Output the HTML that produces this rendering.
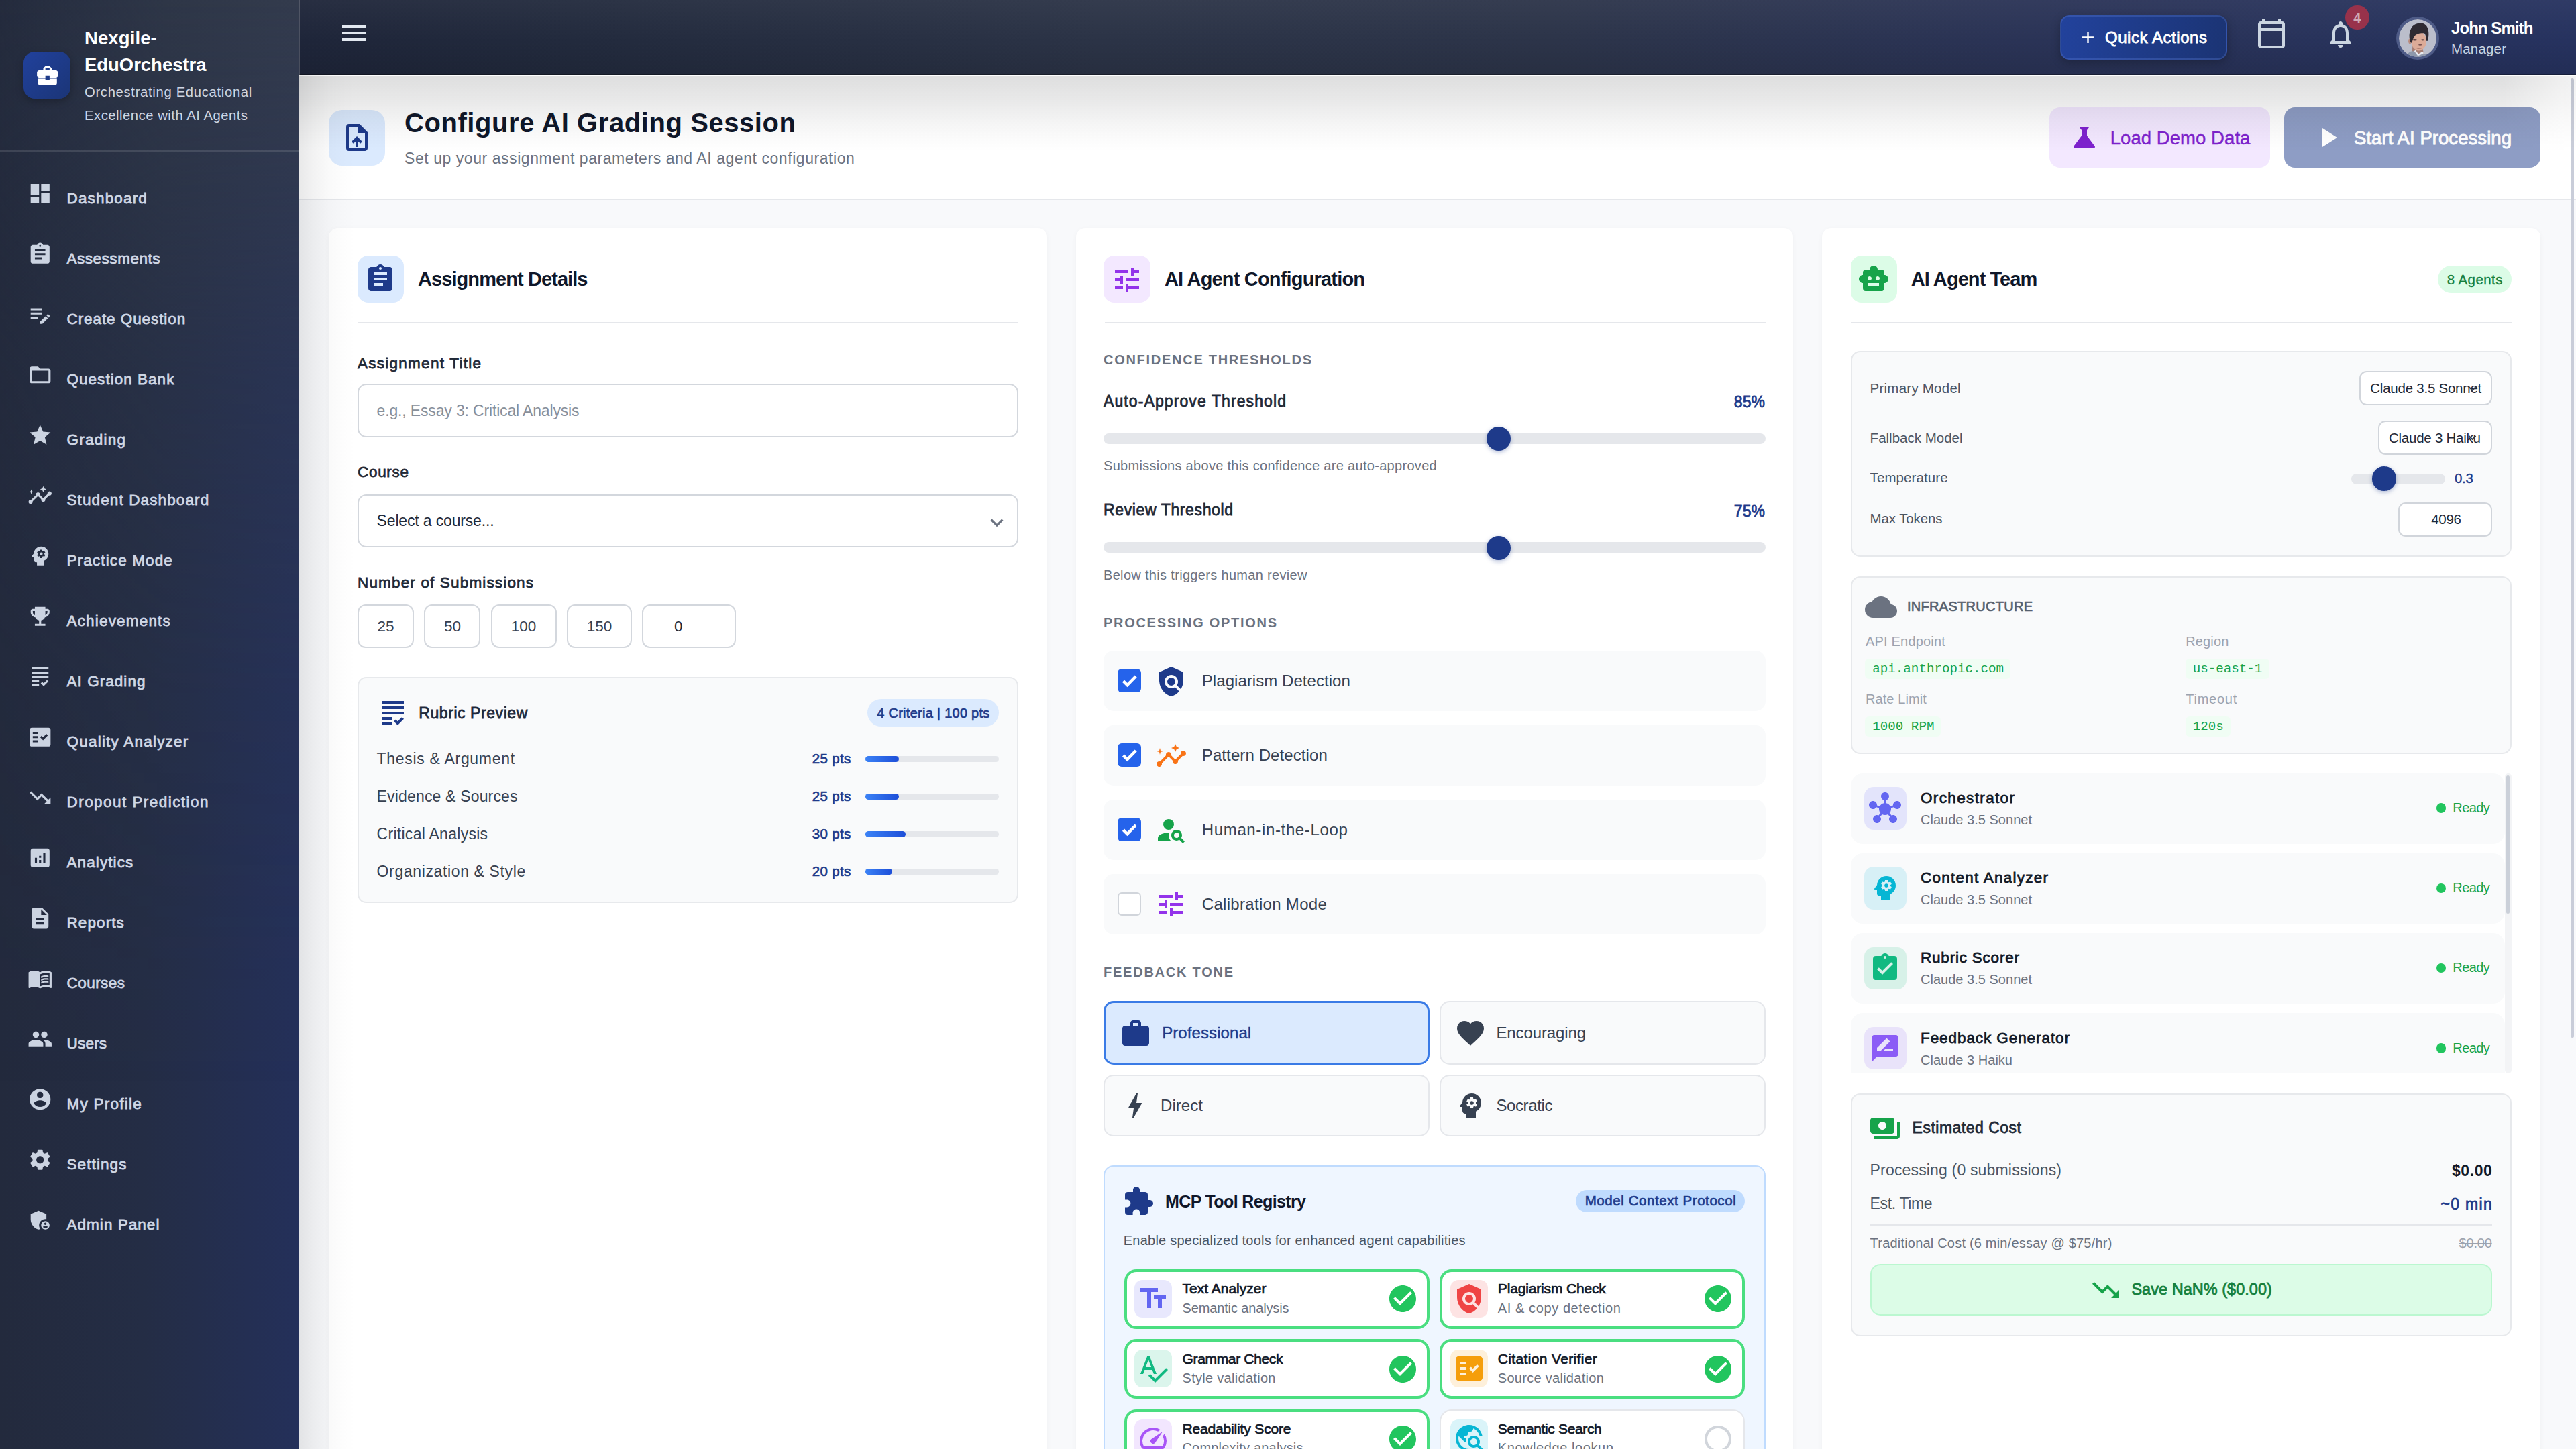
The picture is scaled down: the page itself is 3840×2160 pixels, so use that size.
<!DOCTYPE html>
<html lang="en">
<head>
<meta charset="utf-8">
<title>Configure AI Grading Session - Nexgile-EduOrchestra</title>
<style>
html,body{margin:0;padding:0;background:#f8f9fb;}
body{width:3840px;height:2160px;overflow:hidden;}
#app{position:relative;width:3840px;height:2160px;overflow:hidden;background:#f8f9fb;font-family:"Liberation Sans",sans-serif;}
#app aside,#app header,#app main,#app section,#app nav{display:contents;}
#app div,#app span,#app svg,#app h1,#app h2,#app h3,#app p,#app label,#app a,#app button{position:absolute;box-sizing:border-box;margin:0;padding:0;}
#app .t{white-space:nowrap;line-height:1;font-weight:400;}
#app .f-s{font-family:"Liberation Sans",sans-serif;}
#app .f-m{font-family:"Liberation Mono",monospace;}
#app button{border:none;outline:none;appearance:none;-webkit-appearance:none;font:inherit;}

</style>
</head>
<body>
<div id="app">
<main>
<div style="left:446px;top:112px;width:3394px;height:186px;background:#fff;border-bottom:2px solid #e5e7eb;"></div>
<div style="left:490px;top:164px;width:84px;height:83px;background:#dbeafe;border-radius:20px;"></div>
<svg viewBox="0 0 24 24" style="left:508.2px;top:181.2px;width:48px;height:48px;fill:#1e3a8a;"><path d="M14 2H6c-1.1 0-1.99.9-1.99 2L4 20c0 1.1.89 2 1.99 2H18c1.1 0 2-.9 2-2V8l-6-6zm4 18H6V4h7v5h5v11zM8 15.01l1.41 1.41L11 14.84V19h2v-4.16l1.59 1.59L16 15.01 12.01 11z"/></svg>
<h1 class="t f-s" style="top:162.54px;font-size:40px;color:#0f172a;font-weight:700;letter-spacing:0.575px;left:603px;">Configure AI Grading Session</h1>
<p class="t f-s" style="top:225.43px;font-size:23px;color:#6b7280;letter-spacing:0.556px;left:603px;">Set up your assignment parameters and AI agent configuration</p>
<button style="left:3054.5px;top:160.3px;width:329.5px;height:89.4px;background:#f3e8ff;border-radius:16px;"></button>
<svg viewBox="0 0 24 24" style="left:3082.6px;top:181px;width:48px;height:48px;fill:#7e22ce;"><path d="M19.8 18.4L14 10.67V6.5l1.35-1.69c.26-.33.03-.81-.39-.81H9.04c-.42 0-.65.48-.39.81L10 6.5v4.17L4.2 18.4c-.49.66-.02 1.6.8 1.6h14c.82 0 1.29-.94.8-1.6z"/></svg>
<span class="t f-s" style="top:192.22px;font-size:27.5px;color:#7e22ce;-webkit-text-stroke:0.44px;letter-spacing:0.061px;left:3145.7px;">Load Demo Data</span>
<button style="left:3404.7px;top:160.3px;width:382.4px;height:89.4px;background:#8e9dc5;border-radius:16px;"></button>
<svg viewBox="0 0 24 24" style="left:3446.1px;top:181.2px;width:48px;height:48px;fill:#fff;"><path d="M8 5v14l11-7z"/></svg>
<span class="t f-s" style="top:192.22px;font-size:27.5px;color:#fff;-webkit-text-stroke:0.94px;letter-spacing:0.063px;left:3509px;">Start AI Processing</span>
<div style="left:490px;top:340px;width:1071px;height:1900px;background:#fff;border-radius:14px;box-shadow:0 2px 8px rgba(15,23,42,0.04);"></div>
<div style="left:533px;top:480px;width:985px;height:2px;background:#e5e7eb;"></div>
<div style="left:1603.5px;top:340px;width:1069.5px;height:1900px;background:#fff;border-radius:14px;box-shadow:0 2px 8px rgba(15,23,42,0.04);"></div>
<div style="left:1646.5px;top:480px;width:985px;height:2px;background:#e5e7eb;"></div>
<div style="left:2716px;top:340px;width:1071px;height:1900px;background:#fff;border-radius:14px;box-shadow:0 2px 8px rgba(15,23,42,0.04);"></div>
<div style="left:2759px;top:480px;width:985px;height:2px;background:#e5e7eb;"></div>
<section>
<div style="left:533px;top:381px;width:69px;height:70px;background:#dbeafe;border-radius:16px;"></div>
<svg viewBox="0 0 24 24" style="left:543.1px;top:392px;width:48px;height:48px;fill:#1e3a8a;"><path d="M19 3h-4.18C14.4 1.84 13.3 1 12 1c-1.3 0-2.4.84-2.82 2H5c-1.1 0-2 .9-2 2v14c0 1.1.9 2 2 2h14c1.1 0 2-.9 2-2V5c0-1.1-.9-2-2-2zm-7 0c.55 0 1 .45 1 1s-.45 1-1 1-1-.45-1-1 .45-1 1-1zm2 14H7v-2h7v2zm3-4H7v-2h10v2zm0-4H7V7h10v2z"/></svg>
<h2 class="t f-s" style="top:401.75px;font-size:29px;color:#0f172a;font-weight:700;letter-spacing:-0.920px;left:623px;">Assignment Details</h2>
<label class="t f-s" style="top:530.65px;font-size:22.5px;color:#1f2937;-webkit-text-stroke:0.77px;letter-spacing:1.261px;left:533px;">Assignment Title</label>
<div style="left:533px;top:572px;width:985px;height:80.2px;background:#fff;border:2px solid #d3d7dd;border-radius:13px;"></div>
<span class="t f-s" style="top:601.03px;font-size:23px;color:#878f9b;letter-spacing:-0.155px;left:561.6px;">e.g., Essay 3: Critical Analysis</span>
<label class="t f-s" style="top:693.15px;font-size:22.5px;color:#1f2937;-webkit-text-stroke:0.77px;letter-spacing:0.691px;left:533px;">Course</label>
<div style="left:533px;top:736.6px;width:985px;height:79.4px;background:#fff;border:2px solid #d3d7dd;border-radius:13px;"></div>
<span class="t f-s" style="top:765.03px;font-size:23px;color:#1f2937;letter-spacing:-0.159px;left:561.6px;">Select a course...</span>
<svg viewBox="0 0 24 24" style="left:1466.5px;top:759.5px;width:38px;height:38px;fill:#6b7280;"><path d="M16.59 8.59L12 13.17 7.41 8.59 6 10l6 6 6-6z"/></svg>
<label class="t f-s" style="top:858.25px;font-size:22.5px;color:#1f2937;-webkit-text-stroke:0.77px;letter-spacing:1.158px;left:533px;">Number of Submissions</label>
<div style="left:533px;top:901.4px;width:84px;height:65px;background:#fff;border:2px solid #d3d7dd;border-radius:12px;"></div>
<span class="t f-s" style="top:923.45px;font-size:22.5px;color:#374151;left:575.00px;transform:translateX(-50%);">25</span>
<div style="left:632.4px;top:901.4px;width:84px;height:65px;background:#fff;border:2px solid #d3d7dd;border-radius:12px;"></div>
<span class="t f-s" style="top:923.45px;font-size:22.5px;color:#374151;left:674.40px;transform:translateX(-50%);">50</span>
<div style="left:731.6px;top:901.4px;width:98px;height:65px;background:#fff;border:2px solid #d3d7dd;border-radius:12px;"></div>
<span class="t f-s" style="top:923.45px;font-size:22.5px;color:#374151;left:780.60px;transform:translateX(-50%);">100</span>
<div style="left:845.2px;top:901.4px;width:96.6px;height:65px;background:#fff;border:2px solid #d3d7dd;border-radius:12px;"></div>
<span class="t f-s" style="top:923.45px;font-size:22.5px;color:#374151;left:893.50px;transform:translateX(-50%);">150</span>
<div style="left:957px;top:901.4px;width:140px;height:65px;background:#fff;border:2px solid #d3d7dd;border-radius:12px;"></div>
<span class="t f-s" style="top:923.45px;font-size:22.5px;color:#1f2937;left:1005px;">0</span>
<div style="left:533px;top:1008.8px;width:985px;height:337.7px;background:#f9fafb;border:2px solid #e7e9ec;border-radius:13px;"></div>
<svg viewBox="0 0 24 24" style="left:561.5px;top:1039px;width:48px;height:48px;fill:#1e3a8a;"><path d="M4 7h16v2H4V7zm0 6h16v-2H4v2zm0 4h7v-2H4v2zm0 4h7v-2H4v2zm11.41-2.83L14 16.75l-1.41 1.41L15.41 21 20 16.42 18.58 15l-3.17 3.17zM4 3v2h16V3H4z"/></svg>
<h3 class="t f-s" style="top:1051.53px;font-size:23px;color:#1e293b;-webkit-text-stroke:0.78px;letter-spacing:0.565px;left:624.3px;">Rubric Preview</h3>
<div style="left:1292.8px;top:1042.2px;width:196.4px;height:41px;background:#dbeafe;border-radius:21px;"></div>
<span class="t f-s" style="top:1052.87px;font-size:20px;color:#1e3a8a;-webkit-text-stroke:0.68px;letter-spacing:0.261px;left:1307.3px;">4 Criteria | 100 pts</span>
<span class="t f-s" style="top:1120.13px;font-size:23px;color:#374151;letter-spacing:0.699px;left:561.6px;">Thesis &amp; Argument</span>
<span class="t f-s" style="top:1120.85px;font-size:20.5px;color:#1e3a8a;-webkit-text-stroke:0.70px;letter-spacing:0.308px;right:2571.49px;">25 pts</span>
<div style="left:1289.8px;top:1126.5px;width:199.4px;height:9px;background:#e5e7eb;border-radius:5px;"></div>
<div style="left:1289.8px;top:1126.5px;width:49.85px;height:9px;background:linear-gradient(90deg,#3b82f6,#1d4ed8);border-radius:5px;"></div>
<span class="t f-s" style="top:1176.03px;font-size:23px;color:#374151;letter-spacing:0.169px;left:561.6px;">Evidence &amp; Sources</span>
<span class="t f-s" style="top:1176.75px;font-size:20.5px;color:#1e3a8a;-webkit-text-stroke:0.70px;letter-spacing:0.308px;right:2571.49px;">25 pts</span>
<div style="left:1289.8px;top:1182.5px;width:199.4px;height:9px;background:#e5e7eb;border-radius:5px;"></div>
<div style="left:1289.8px;top:1182.5px;width:49.85px;height:9px;background:linear-gradient(90deg,#3b82f6,#1d4ed8);border-radius:5px;"></div>
<span class="t f-s" style="top:1231.93px;font-size:23px;color:#374151;letter-spacing:0.278px;left:561.6px;">Critical Analysis</span>
<span class="t f-s" style="top:1232.65px;font-size:20.5px;color:#1e3a8a;-webkit-text-stroke:0.70px;letter-spacing:0.308px;right:2571.49px;">30 pts</span>
<div style="left:1289.8px;top:1238.5px;width:199.4px;height:9px;background:#e5e7eb;border-radius:5px;"></div>
<div style="left:1289.8px;top:1238.5px;width:59.82px;height:9px;background:linear-gradient(90deg,#3b82f6,#1d4ed8);border-radius:5px;"></div>
<span class="t f-s" style="top:1287.83px;font-size:23px;color:#374151;letter-spacing:0.633px;left:561.6px;">Organization &amp; Style</span>
<span class="t f-s" style="top:1288.55px;font-size:20.5px;color:#1e3a8a;-webkit-text-stroke:0.70px;letter-spacing:0.308px;right:2571.49px;">20 pts</span>
<div style="left:1289.8px;top:1294.5px;width:199.4px;height:9px;background:#e5e7eb;border-radius:5px;"></div>
<div style="left:1289.8px;top:1294.5px;width:39.88px;height:9px;background:linear-gradient(90deg,#3b82f6,#1d4ed8);border-radius:5px;"></div>
</section>
<section>
<div style="left:1645px;top:381px;width:70px;height:70px;background:#f3e8ff;border-radius:16px;"></div>
<svg viewBox="0 0 24 24" style="left:1655.8px;top:392.5px;width:48px;height:48px;fill:#9333ea;"><path d="M3 17v2h6v-2H3zM3 5v2h10V5H3zm10 16v-2h8v-2h-8v-2h-2v6h2zM7 9v2H3v2h4v2h2V9H7zm14 4v-2H11v2h10zm-6-4h2V7h4V5h-4V3h-2v6z"/></svg>
<h2 class="t f-s" style="top:401.75px;font-size:29px;color:#0f172a;font-weight:700;letter-spacing:-0.823px;left:1736px;">AI Agent Configuration</h2>
<h3 class="t f-s" style="top:526.07px;font-size:20px;color:#6b7280;font-weight:700;letter-spacing:1.721px;left:1645px;">CONFIDENCE THRESHOLDS</h3>
<span class="t f-s" style="top:586.53px;font-size:23px;color:#1f2937;-webkit-text-stroke:0.78px;letter-spacing:1.100px;left:1645px;">Auto-Approve Threshold</span>
<span class="t f-s" style="top:587.53px;font-size:23px;color:#1e3a8a;-webkit-text-stroke:0.78px;letter-spacing:0.077px;right:1208.92px;">85%</span>
<div style="left:1645px;top:645.5px;width:987px;height:16px;background:#e5e7eb;border-radius:8px;"></div>
<div style="left:2215.5px;top:635.6px;width:36px;height:36px;background:#1e3a8a;border-radius:50%;box-shadow:0 2px 6px rgba(30,58,138,0.35);"></div>
<span class="t f-s" style="top:684.07px;font-size:20px;color:#6b7280;letter-spacing:0.306px;left:1645px;">Submissions above this confidence are auto-approved</span>
<span class="t f-s" style="top:748.53px;font-size:23px;color:#1f2937;-webkit-text-stroke:0.78px;letter-spacing:0.622px;left:1645px;">Review Threshold</span>
<span class="t f-s" style="top:750.53px;font-size:23px;color:#1e3a8a;-webkit-text-stroke:0.78px;letter-spacing:0.077px;right:1208.92px;">75%</span>
<div style="left:1645px;top:808.3px;width:987px;height:16px;background:#e5e7eb;border-radius:8px;"></div>
<div style="left:2215.5px;top:799px;width:36px;height:36px;background:#1e3a8a;border-radius:50%;box-shadow:0 2px 6px rgba(30,58,138,0.35);"></div>
<span class="t f-s" style="top:847.27px;font-size:20px;color:#6b7280;letter-spacing:0.324px;left:1645px;">Below this triggers human review</span>
<h3 class="t f-s" style="top:918.07px;font-size:20px;color:#6b7280;font-weight:700;letter-spacing:1.710px;left:1645px;">PROCESSING OPTIONS</h3>
<div style="left:1645px;top:970.4px;width:987px;height:89.8px;background:#f9fafb;border-radius:15px;"></div>
<div style="left:1665.5px;top:997.2px;width:35px;height:35px;background:#2563eb;border-radius:6px;"></div>
<svg viewBox="0 0 24 24" style="left:1667.5px;top:999.2px;width:31px;height:31px;fill:none;stroke:#fff;stroke-width:3.4;stroke-linecap:butt;stroke-linejoin:miter"><path d="M5 12.5l4.6 4.6L19.5 7"/></svg>
<svg viewBox="0 0 24 24" style="left:1721.7px;top:991.6px;width:48px;height:48px;fill:#1e3a8a;"><path d="M21 5l-9-4-9 4v6c0 5.55 3.84 10.74 9 12 2.3-.56 4.33-1.9 5.88-3.71l-3.12-3.12c-1.94 1.29-4.58 1.07-6.29-.64-1.95-1.95-1.95-5.12 0-7.07 1.95-1.95 5.12-1.95 7.07 0 1.71 1.71 1.92 4.35.64 6.29l2.9 2.9C20.29 15.69 21 13.38 21 11V5zM12 9a3 3 0 1 0 0 6 3 3 0 0 0 0-6z"/></svg>
<span class="t f-s" style="top:1003.38px;font-size:24px;color:#374151;letter-spacing:0.048px;left:1791.8px;">Plagiarism Detection</span>
<div style="left:1645px;top:1081.3px;width:987px;height:89.8px;background:#f9fafb;border-radius:15px;"></div>
<div style="left:1665.5px;top:1108.1px;width:35px;height:35px;background:#2563eb;border-radius:6px;"></div>
<svg viewBox="0 0 24 24" style="left:1667.5px;top:1110.1px;width:31px;height:31px;fill:none;stroke:#fff;stroke-width:3.4;stroke-linecap:butt;stroke-linejoin:miter"><path d="M5 12.5l4.6 4.6L19.5 7"/></svg>
<svg viewBox="0 0 24 24" style="left:1721.7px;top:1102.5px;width:48px;height:48px;fill:#f97316;"><path d="M21 8c-1.45 0-2.26 1.44-1.93 2.51l-3.55 3.56c-.3-.09-.74-.09-1.04 0l-2.55-2.55C12.27 10.45 11.46 9 10 9c-1.45 0-2.27 1.44-1.93 2.52l-4.56 4.55C2.44 15.74 1 16.55 1 18c0 1.1.9 2 2 2 1.45 0 2.26-1.44 1.93-2.51l4.55-4.56c.3.09.74.09 1.04 0l2.55 2.55C12.73 16.55 13.54 18 15 18c1.45 0 2.27-1.44 1.93-2.52l3.56-3.55c1.07.33 2.51-.48 2.51-1.93 0-1.1-.9-2-2-2zM15 9l.94-2.07L18 6l-2.06-.93L15 3l-.92 2.07L12 6l2.08.93zM3.5 11L4 9l2-.5L4 8l-.5-2L3 8l-2 .5L3 9z"/></svg>
<span class="t f-s" style="top:1114.28px;font-size:24px;color:#374151;letter-spacing:0.098px;left:1791.8px;">Pattern Detection</span>
<div style="left:1645px;top:1192.2px;width:987px;height:89.8px;background:#f9fafb;border-radius:15px;"></div>
<div style="left:1665.5px;top:1219px;width:35px;height:35px;background:#2563eb;border-radius:6px;"></div>
<svg viewBox="0 0 24 24" style="left:1667.5px;top:1221px;width:31px;height:31px;fill:none;stroke:#fff;stroke-width:3.4;stroke-linecap:butt;stroke-linejoin:miter"><path d="M5 12.5l4.6 4.6L19.5 7"/></svg>
<svg viewBox="0 0 24 24" style="left:1721.7px;top:1213.4px;width:48px;height:48px;fill:#16a34a;"><path d="M10 4a4 4 0 1 0 0 8 4 4 0 0 0 0-8zM10.35 14.01C7.62 13.91 2 15.27 2 18v2h9.54c-2.47-2.76-1.23-5.89-1.19-5.99zM19.43 18.02c.36-.59.57-1.28.57-2.02 0-2.21-1.79-4-4-4s-4 1.79-4 4 1.79 4 4 4c.74 0 1.43-.22 2.02-.57L20.59 22 22 20.59l-2.57-2.57zM16 18c-1.1 0-2-.9-2-2s.9-2 2-2 2 .9 2 2-.9 2-2 2z"/></svg>
<span class="t f-s" style="top:1225.18px;font-size:24px;color:#374151;letter-spacing:0.639px;left:1791.8px;">Human-in-the-Loop</span>
<div style="left:1645px;top:1303.1px;width:987px;height:89.8px;background:#f9fafb;border-radius:15px;"></div>
<div style="left:1665.5px;top:1329.9px;width:35px;height:35px;background:#fff;border:2px solid #d1d5db;border-radius:6px;"></div>
<svg viewBox="0 0 24 24" style="left:1721.7px;top:1324.3px;width:48px;height:48px;fill:#9333ea;"><path d="M3 17v2h6v-2H3zM3 5v2h10V5H3zm10 16v-2h8v-2h-8v-2h-2v6h2zM7 9v2H3v2h4v2h2V9H7zm14 4v-2H11v2h10zm-6-4h2V7h4V5h-4V3h-2v6z"/></svg>
<span class="t f-s" style="top:1336.08px;font-size:24px;color:#374151;letter-spacing:0.304px;left:1791.8px;">Calibration Mode</span>
<h3 class="t f-s" style="top:1438.77px;font-size:20px;color:#6b7280;font-weight:700;letter-spacing:1.760px;left:1645px;">FEEDBACK TONE</h3>
<div style="left:1645px;top:1491.8px;width:485.6px;height:95.6px;background:#dbeafe;border:3.4px solid #3a7be6;border-radius:15px;"></div>
<svg viewBox="0 0 24 24" style="left:1669.3px;top:1517px;width:48px;height:48px;fill:#1e3a8a;"><path d="M20 6h-4V4c0-1.11-.89-2-2-2h-4c-1.11 0-2 .89-2 2v2H4c-1.11 0-1.99.89-1.99 2L2 19c0 1.11.89 2 2 2h16c1.11 0 2-.89 2-2V8c0-1.11-.89-2-2-2zm-6 0h-4V4h4v2z"/></svg>
<span class="t f-s" style="top:1527.68px;font-size:24px;color:#1e3a8a;-webkit-text-stroke:0.38px;letter-spacing:0.084px;left:1732.2px;">Professional</span>
<div style="left:2145.8px;top:1491.8px;width:486px;height:95.6px;background:#f9fafb;border:2px solid #e5e7eb;border-radius:15px;"></div>
<svg viewBox="0 0 24 24" style="left:2168px;top:1516.4px;width:48px;height:48px;fill:#374151;"><path d="M12 21.35l-1.45-1.32C5.4 15.36 2 12.28 2 8.5 2 5.42 4.42 3 7.5 3c1.74 0 3.41.81 4.5 2.09C13.09 3.81 14.76 3 16.5 3 19.58 3 22 5.42 22 8.5c0 3.78-3.4 6.86-8.55 11.54L12 21.35z"/></svg>
<span class="t f-s" style="top:1527.68px;font-size:24px;color:#374151;letter-spacing:-0.097px;left:2230.4px;">Encouraging</span>
<div style="left:1645px;top:1602.3px;width:485.6px;height:92.2px;background:#f9fafb;border:2px solid #e5e7eb;border-radius:15px;"></div>
<svg viewBox="0 0 24 24" style="left:1667.9px;top:1624px;width:48px;height:48px;fill:#374151;"><path d="M11 21h-1l1-7H7.5c-.58 0-.57-.32-.38-.66.19-.34.05-.08.07-.12C8.48 10.94 10.42 7.54 13 3h1l-1 7h3.5c.49 0 .56.33.47.51l-.07.15C12.96 17.55 11 21 11 21z"/></svg>
<span class="t f-s" style="top:1635.68px;font-size:24px;color:#374151;letter-spacing:0.066px;left:1730px;">Direct</span>
<div style="left:2145.8px;top:1602.3px;width:486px;height:92.2px;background:#f9fafb;border:2px solid #e5e7eb;border-radius:15px;"></div>
<svg viewBox="0 0 24 24" style="left:2168.4px;top:1624px;width:48px;height:48px;fill:#374151;"><path d="M13 8.57c-.79 0-1.43.64-1.43 1.43s.64 1.43 1.43 1.43 1.43-.64 1.43-1.43-.64-1.43-1.43-1.43zM13 3C9.25 3 6.2 5.94 6.02 9.64L4.1 12.2c-.25.33-.01.8.4.8H6v3c0 1.1.9 2 2 2h1v3h7v-4.68c2.36-1.12 4-3.53 4-6.32 0-3.87-3.13-7-7-7zm3 7c0 .13-.01.26-.02.39l.83.66c.08.06.1.16.05.25l-.8 1.39c-.05.09-.16.12-.24.09l-.99-.4c-.21.16-.43.29-.67.39L14 13.83c-.01.1-.1.17-.2.17h-1.6c-.1 0-.18-.07-.2-.17l-.15-1.06c-.25-.1-.47-.23-.68-.39l-.99.4c-.09.03-.2 0-.25-.09l-.8-1.39c-.05-.08-.03-.19.05-.25l.84-.66c-.01-.13-.02-.26-.02-.39s.02-.27.04-.39l-.85-.66c-.08-.06-.1-.16-.05-.26l.8-1.38c.05-.09.15-.12.24-.09l1 .4c.2-.15.43-.29.67-.39l.15-1.06c.02-.1.1-.17.2-.17h1.6c.1 0 .18.07.2.17l.15 1.06c.24.1.46.23.67.39l1-.4c.09-.03.2 0 .24.09l.8 1.38c.05.09.03.2-.05.26l-.85.66c.03.12.04.25.04.39z"/></svg>
<span class="t f-s" style="top:1635.68px;font-size:24px;color:#374151;letter-spacing:-0.386px;left:2230.4px;">Socratic</span>
<div style="left:1645px;top:1736.6px;width:987px;height:500px;background:#eff6ff;border:2px solid #bfdbfe;border-radius:15px;"></div>
<svg viewBox="0 0 24 24" style="left:1673.4px;top:1767px;width:48px;height:48px;fill:#1e3a8a;"><path d="M20.5 11H19V7c0-1.1-.9-2-2-2h-4V3.5C13 2.12 11.88 1 10.5 1S8 2.12 8 3.5V5H4c-1.1 0-1.99.9-1.99 2v3.8H3.5c1.49 0 2.7 1.21 2.7 2.7s-1.21 2.7-2.7 2.7H2V20c0 1.1.9 2 2 2h3.8v-1.5c0-1.49 1.21-2.7 2.7-2.7 1.49 0 2.7 1.21 2.7 2.7V22H17c1.1 0 2-.9 2-2v-4h1.5c1.38 0 2.5-1.12 2.5-2.5S21.88 11 20.5 11z"/></svg>
<h3 class="t f-s" style="top:1778.84px;font-size:25px;color:#0f172a;font-weight:700;letter-spacing:-0.621px;left:1737px;">MCP Tool Registry</h3>
<div style="left:2348.6px;top:1773.5px;width:252.6px;height:33px;background:#bfdbfe;border-radius:17px;"></div>
<span class="t f-s" style="top:1780.15px;font-size:20.5px;color:#1e3a8a;-webkit-text-stroke:0.70px;letter-spacing:0.568px;left:2362.7px;">Model Context Protocol</span>
<span class="t f-s" style="top:1838.57px;font-size:20px;color:#4b5563;letter-spacing:0.232px;left:1674.8px;">Enable specialized tools for enhanced agent capabilities</span>
<div style="left:1675.5px;top:1892px;width:455.1px;height:88.7px;background:#fff;border:4px solid #4ade80;border-radius:18px;"></div>
<div style="left:1691.2px;top:1907.7px;width:56px;height:56px;background:#e8e8fd;border-radius:12px;"></div>
<svg viewBox="0 0 24 24" style="left:1695.2px;top:1911.7px;width:48px;height:48px;fill:#6366f1;"><path d="M2.5 4v3h5v12h3V7h5V4h-13zm19 5h-9v3h3v7h3v-7h3V9z"/></svg>
<span class="t f-s" style="top:1910.42px;font-size:21px;color:#111827;-webkit-text-stroke:0.71px;letter-spacing:0.008px;left:1762.5px;">Text Analyzer</span>
<span class="t f-s" style="top:1939.57px;font-size:20px;color:#6b7280;letter-spacing:-0.137px;left:1762.5px;">Semantic analysis</span>
<svg viewBox="0 0 24 24" style="left:2066.5px;top:1912.4px;width:48px;height:48px;fill:#22c55e;"><path d="M12 2C6.48 2 2 6.48 2 12s4.48 10 10 10 10-4.48 10-10S17.52 2 12 2zm-2 15l-5-5 1.41-1.41L10 14.17l7.59-7.59L19 8l-9 9z"/></svg>
<div style="left:2145.8px;top:1892px;width:455.4px;height:88.7px;background:#fff;border:4px solid #4ade80;border-radius:18px;"></div>
<div style="left:2161.5px;top:1907.7px;width:56px;height:56px;background:#fde3e3;border-radius:12px;"></div>
<svg viewBox="0 0 24 24" style="left:2165.5px;top:1911.7px;width:48px;height:48px;fill:#ef4444;"><path d="M21 5l-9-4-9 4v6c0 5.55 3.84 10.74 9 12 2.3-.56 4.33-1.9 5.88-3.71l-3.12-3.12c-1.94 1.29-4.58 1.07-6.29-.64-1.95-1.95-1.95-5.12 0-7.07 1.95-1.95 5.12-1.95 7.07 0 1.71 1.71 1.92 4.35.64 6.29l2.9 2.9C20.29 15.69 21 13.38 21 11V5zM12 9a3 3 0 1 0 0 6 3 3 0 0 0 0-6z"/></svg>
<span class="t f-s" style="top:1910.42px;font-size:21px;color:#111827;-webkit-text-stroke:0.71px;letter-spacing:-0.159px;left:2232.8px;">Plagiarism Check</span>
<span class="t f-s" style="top:1939.57px;font-size:20px;color:#6b7280;letter-spacing:0.593px;left:2232.8px;">AI &amp; copy detection</span>
<svg viewBox="0 0 24 24" style="left:2536.8px;top:1912.4px;width:48px;height:48px;fill:#22c55e;"><path d="M12 2C6.48 2 2 6.48 2 12s4.48 10 10 10 10-4.48 10-10S17.52 2 12 2zm-2 15l-5-5 1.41-1.41L10 14.17l7.59-7.59L19 8l-9 9z"/></svg>
<div style="left:1675.5px;top:1996.3px;width:455.1px;height:88.7px;background:#fff;border:4px solid #4ade80;border-radius:18px;"></div>
<div style="left:1691.2px;top:2012px;width:56px;height:56px;background:#dbf5ec;border-radius:12px;"></div>
<svg viewBox="0 0 24 24" style="left:1695.2px;top:2016px;width:48px;height:48px;fill:#10b981;"><path d="M12.45 16h2.09L9.43 3H7.57L2.46 16h2.09l1.12-3h5.64l1.14 3zm-6.02-5L8.5 5.48 10.57 11H6.43zm15.16.59l-8.09 8.09L9.83 16l-1.41 1.41 5.09 5.09L23 13l-1.41-1.41z"/></svg>
<span class="t f-s" style="top:2014.72px;font-size:21px;color:#111827;-webkit-text-stroke:0.71px;letter-spacing:-0.336px;left:1762.5px;">Grammar Check</span>
<span class="t f-s" style="top:2043.87px;font-size:20px;color:#6b7280;letter-spacing:0.298px;left:1762.5px;">Style validation</span>
<svg viewBox="0 0 24 24" style="left:2066.5px;top:2016.7px;width:48px;height:48px;fill:#22c55e;"><path d="M12 2C6.48 2 2 6.48 2 12s4.48 10 10 10 10-4.48 10-10S17.52 2 12 2zm-2 15l-5-5 1.41-1.41L10 14.17l7.59-7.59L19 8l-9 9z"/></svg>
<div style="left:2145.8px;top:1996.3px;width:455.4px;height:88.7px;background:#fff;border:4px solid #4ade80;border-radius:18px;"></div>
<div style="left:2161.5px;top:2012px;width:56px;height:56px;background:#fef0da;border-radius:12px;"></div>
<svg viewBox="0 0 24 24" style="left:2165.5px;top:2016px;width:48px;height:48px;fill:#f59e0b;"><path d="M20 3H4c-1.1 0-2 .9-2 2v14c0 1.1.9 2 2 2h16c1.1 0 2-.9 2-2V5c0-1.1-.9-2-2-2zM10 17H5v-2h5v2zm0-4H5v-2h5v2zm0-4H5V7h5v2zm4.82 6L12 12.16l1.41-1.41 1.41 1.42L17.99 9l1.42 1.42L14.82 15z"/></svg>
<span class="t f-s" style="top:2014.72px;font-size:21px;color:#111827;-webkit-text-stroke:0.71px;letter-spacing:0.350px;left:2232.8px;">Citation Verifier</span>
<span class="t f-s" style="top:2043.87px;font-size:20px;color:#6b7280;letter-spacing:0.285px;left:2232.8px;">Source validation</span>
<svg viewBox="0 0 24 24" style="left:2536.8px;top:2016.7px;width:48px;height:48px;fill:#22c55e;"><path d="M12 2C6.48 2 2 6.48 2 12s4.48 10 10 10 10-4.48 10-10S17.52 2 12 2zm-2 15l-5-5 1.41-1.41L10 14.17l7.59-7.59L19 8l-9 9z"/></svg>
<div style="left:1675.5px;top:2100.6px;width:455.1px;height:88.7px;background:#fff;border:4px solid #4ade80;border-radius:18px;"></div>
<div style="left:1691.2px;top:2116.3px;width:56px;height:56px;background:#f2e6fe;border-radius:12px;"></div>
<svg viewBox="0 0 24 24" style="left:1695.2px;top:2120.3px;width:48px;height:48px;fill:#a855f7;"><path d="M20.38 8.57l-1.23 1.85a8 8 0 0 1-.22 7.58H5.07A8 8 0 0 1 15.58 6.85l1.85-1.23A10 10 0 0 0 3.35 19a2 2 0 0 0 1.72 1h13.85a2 2 0 0 0 1.74-1 10 10 0 0 0-.27-10.44zm-9.79 6.84a2 2 0 0 0 2.83 0l5.66-8.49-8.49 5.66a2 2 0 0 0 0 2.83z"/></svg>
<span class="t f-s" style="top:2119.02px;font-size:21px;color:#111827;-webkit-text-stroke:0.71px;letter-spacing:-0.162px;left:1762.5px;">Readability Score</span>
<span class="t f-s" style="top:2148.17px;font-size:20px;color:#6b7280;letter-spacing:0.181px;left:1762.5px;">Complexity analysis</span>
<svg viewBox="0 0 24 24" style="left:2066.5px;top:2121px;width:48px;height:48px;fill:#22c55e;"><path d="M12 2C6.48 2 2 6.48 2 12s4.48 10 10 10 10-4.48 10-10S17.52 2 12 2zm-2 15l-5-5 1.41-1.41L10 14.17l7.59-7.59L19 8l-9 9z"/></svg>
<div style="left:2145.8px;top:2100.6px;width:455.4px;height:88.7px;background:#fff;border:2px solid #e5e7eb;border-radius:18px;"></div>
<div style="left:2161.5px;top:2116.3px;width:56px;height:56px;background:#daf4f9;border-radius:12px;"></div>
<svg viewBox="0 0 24 24" style="left:2165.5px;top:2120.3px;width:48px;height:48px;fill:#06b6d4;"><path d="M19.3 16.9c.4-.7.7-1.5.7-2.4 0-2.5-2-4.5-4.5-4.5S11 12 11 14.5s2 4.5 4.5 4.5c.9 0 1.7-.3 2.4-.7l3.2 3.2 1.4-1.4-3.2-3.2zm-3.8.1c-1.4 0-2.5-1.1-2.5-2.5s1.1-2.5 2.5-2.5 2.5 1.1 2.5 2.5-1.1 2.5-2.5 2.5zM12 20v2C6.48 22 2 17.52 2 12S6.48 2 12 2c4.84 0 8.87 3.44 9.8 8h-2.07c-.64-2.46-2.4-4.47-4.73-5.41V5c0 1.1-.9 2-2 2h-2v2c0 .55-.45 1-1 1H8v2h2v3H9l-4.79-4.79C4.08 10.79 4 11.38 4 12c0 4.41 3.59 8 8 8z"/></svg>
<span class="t f-s" style="top:2119.02px;font-size:21px;color:#111827;-webkit-text-stroke:0.71px;letter-spacing:-0.352px;left:2232.8px;">Semantic Search</span>
<span class="t f-s" style="top:2148.17px;font-size:20px;color:#6b7280;letter-spacing:0.569px;left:2232.8px;">Knowledge lookup</span>
<div style="left:2540.8px;top:2125.1px;width:40px;height:40px;border:4px solid #d1d5db;border-radius:50%;"></div>
</section>
<section>
<div style="left:2758.5px;top:381px;width:69px;height:70px;background:#dcfce7;border-radius:16px;"></div>
<svg viewBox="0 0 24 24" style="left:2768.8px;top:392.2px;width:48px;height:48px;fill:#16a34a;"><path d="M20 9V7c0-1.1-.9-2-2-2h-3c0-1.66-1.34-3-3-3S9 3.34 9 5H6c-1.1 0-2 .9-2 2v2c-1.66 0-3 1.34-3 3s1.34 3 3 3v4c0 1.1.9 2 2 2h12c1.1 0 2-.9 2-2v-4c1.66 0 3-1.34 3-3s-1.34-3-3-3zM7.5 11.5c0-.83.67-1.5 1.5-1.5s1.5.67 1.5 1.5S9.83 13 9 13s-1.5-.67-1.5-1.5zM16 17H8v-2h8v2zm-1-4c-.83 0-1.5-.67-1.5-1.5S14.17 10 15 10s1.5.67 1.5 1.5S15.83 13 15 13z"/></svg>
<h2 class="t f-s" style="top:401.75px;font-size:29px;color:#0f172a;font-weight:700;letter-spacing:-0.934px;left:2848.7px;">AI Agent Team</h2>
<div style="left:3634px;top:396px;width:110px;height:41px;background:#dcfce7;border-radius:21px;"></div>
<span class="t f-s" style="top:406.65px;font-size:20.5px;color:#15803d;-webkit-text-stroke:0.33px;letter-spacing:0.429px;left:3647.7px;">8 Agents</span>
<div style="left:2758.5px;top:523.2px;width:985px;height:307px;background:#f9fafb;border:2px solid #e7e9ec;border-radius:14px;"></div>
<span class="t f-s" style="top:569.25px;font-size:20.5px;color:#4b5563;letter-spacing:0.238px;left:2787.6px;">Primary Model</span>
<span class="t f-s" style="top:642.65px;font-size:20.5px;color:#4b5563;letter-spacing:0.010px;left:2787.6px;">Fallback Model</span>
<span class="t f-s" style="top:702.25px;font-size:20.5px;color:#4b5563;letter-spacing:0.091px;left:2787.6px;">Temperature</span>
<span class="t f-s" style="top:763.35px;font-size:20.5px;color:#4b5563;letter-spacing:-0.113px;left:2787.6px;">Max Tokens</span>
<div style="left:3517.3px;top:553px;width:197.5px;height:51.4px;background:#fff;border:2px solid #d1d5db;border-radius:11px;"></div>
<span class="t f-s" style="top:568.95px;font-size:20.5px;color:#1f2937;letter-spacing:-0.239px;left:3533.3px;">Claude 3.5 Sonnet</span>
<svg viewBox="0 0 24 24" style="left:3674px;top:568px;width:23px;height:23px;fill:#374151;"><path d="M16.59 8.59L12 13.17 7.41 8.59 6 10l6 6 6-6z"/></svg>
<div style="left:3544.5px;top:626.8px;width:170.3px;height:51.4px;background:#fff;border:2px solid #d1d5db;border-radius:11px;"></div>
<span class="t f-s" style="top:642.65px;font-size:20.5px;color:#1f2937;letter-spacing:-0.244px;left:3561px;">Claude 3 Haiku</span>
<svg viewBox="0 0 24 24" style="left:3674px;top:641px;width:23px;height:23px;fill:#374151;"><path d="M16.59 8.59L12 13.17 7.41 8.59 6 10l6 6 6-6z"/></svg>
<div style="left:3505.3px;top:705.8px;width:139.4px;height:16px;background:#e5e7eb;border-radius:8px;"></div>
<div style="left:3536px;top:695.4px;width:36.4px;height:36.4px;background:#1e3a8a;border-radius:50%;box-shadow:0 2px 6px rgba(30,58,138,0.35);"></div>
<span class="t f-s" style="top:703.15px;font-size:20.5px;color:#1e3a8a;-webkit-text-stroke:0.33px;letter-spacing:-0.250px;left:3658.9px;">0.3</span>
<div style="left:3575px;top:748.7px;width:139.8px;height:51.2px;background:#fff;border:2px solid #d1d5db;border-radius:11px;"></div>
<span class="t f-s" style="top:764.15px;font-size:20.5px;color:#1f2937;letter-spacing:-0.270px;left:3646.47px;transform:translateX(-50%);">4096</span>
<div style="left:2758.5px;top:858.6px;width:985px;height:265.4px;background:#f9fafb;border:2px solid #e7e9ec;border-radius:14px;"></div>
<svg viewBox="0 0 24 24" style="left:2780px;top:880.5px;width:48px;height:48px;fill:#6b7280;"><path d="M19.35 10.04C18.67 6.59 15.64 4 12 4 9.11 4 6.6 5.64 5.35 8.04 2.34 8.36 0 10.91 0 14c0 3.31 2.69 6 6 6h13c2.76 0 5-2.24 5-5 0-2.64-2.05-4.78-4.65-4.96z"/></svg>
<h3 class="t f-s" style="top:893.87px;font-size:20px;color:#56606e;-webkit-text-stroke:0.68px;letter-spacing:0.281px;left:2843px;">INFRASTRUCTURE</h3>
<span class="t f-s" style="top:946.07px;font-size:20px;color:#9ca3af;letter-spacing:0.205px;left:2780.9px;">API Endpoint</span>
<span class="t f-s" style="top:946.07px;font-size:20px;color:#9ca3af;letter-spacing:0.122px;left:3258.3px;">Region</span>
<span class="t f-s" style="top:1032.47px;font-size:20px;color:#9ca3af;letter-spacing:0.108px;left:2780.9px;">Rate Limit</span>
<span class="t f-s" style="top:1032.47px;font-size:20px;color:#9ca3af;letter-spacing:0.747px;left:3258.3px;">Timeout</span>
<div style="left:2780px;top:981.6px;width:217.4px;height:30px;background:#f0fdf4;border-radius:6px;"></div>
<span class="t f-m" style="top:987.79px;font-size:19.2px;color:#16a34a;left:2791.3px;">api.anthropic.com</span>
<div style="left:3258.3px;top:981.6px;width:124.7px;height:30px;background:#f0fdf4;border-radius:6px;"></div>
<span class="t f-m" style="top:987.79px;font-size:19.2px;color:#16a34a;left:3268.7px;">us-east-1</span>
<div style="left:2780px;top:1067.5px;width:113px;height:30px;background:#f0fdf4;border-radius:6px;"></div>
<span class="t f-m" style="top:1073.79px;font-size:19.2px;color:#16a34a;left:2791.3px;">1000 RPM</span>
<div style="left:3258.3px;top:1067.5px;width:67px;height:30px;background:#f0fdf4;border-radius:6px;"></div>
<span class="t f-m" style="top:1073.79px;font-size:19.2px;color:#16a34a;left:3268.7px;">120s</span>
<div style="left:2758.5px;top:1152.7px;width:985px;height:447.3px;overflow:hidden;">
<div style="left:0px;top:0px;width:975px;height:105px;background:#f9fafb;border-radius:18px;"></div>
<div style="left:20.5px;top:20.5px;width:62.5px;height:63.5px;background:#e3e4fb;border-radius:14px;"></div>
<svg viewBox="0 0 24 24" style="left:27.5px;top:28.3px;width:48px;height:48px;fill:#6366f1;"><path d="M8.4 18.2c.38.5.6 1.12.6 1.8 0 1.66-1.34 3-3 3s-3-1.34-3-3 1.34-3 3-3c.44 0 .85.09 1.23.26l1.41-1.77c-.92-1.03-1.29-2.39-1.09-3.69l-2.03-.68C4.98 11.95 4.06 12.5 3 12.5c-1.66 0-3-1.34-3-3s1.34-3 3-3 3 1.34 3 3c0 .07 0 .14-.01.21l2.03.68c.64-1.21 1.82-2.09 3.22-2.32V5.91C9.96 5.57 9 4.4 9 3c0-1.66 1.34-3 3-3s3 1.34 3 3c0 1.4-.96 2.57-2.25 2.91v2.16c1.4.23 2.58 1.11 3.22 2.32l2.03-.68C18 9.64 18 9.57 18 9.5c0-1.66 1.34-3 3-3s3 1.34 3 3-1.34 3-3 3c-1.06 0-1.98-.55-2.52-1.37l-2.03.68c.2 1.29-.16 2.65-1.09 3.69l1.41 1.77c.38-.17.79-.26 1.23-.26 1.66 0 3 1.34 3 3s-1.34 3-3 3-3-1.34-3-3c0-.68.22-1.3.6-1.8l-1.41-1.77c-1.35.75-3.01.76-4.37 0L8.4 18.2z"/></svg>
<div style="left:873.2px;top:44.8px;width:14.5px;height:14.5px;background:#22c55e;border-radius:50%;"></div>
<div style="left:0px;top:119.2px;width:975px;height:105px;background:#f9fafb;border-radius:18px;"></div>
<div style="left:20.5px;top:139.7px;width:62.5px;height:63.5px;background:#d7f0f6;border-radius:14px;"></div>
<svg viewBox="0 0 24 24" style="left:27.5px;top:147.5px;width:48px;height:48px;fill:#06b6d4;"><path d="M13 8.57c-.79 0-1.43.64-1.43 1.43s.64 1.43 1.43 1.43 1.43-.64 1.43-1.43-.64-1.43-1.43-1.43zM13 3C9.25 3 6.2 5.94 6.02 9.64L4.1 12.2c-.25.33-.01.8.4.8H6v3c0 1.1.9 2 2 2h1v3h7v-4.68c2.36-1.12 4-3.53 4-6.32 0-3.87-3.13-7-7-7zm3 7c0 .13-.01.26-.02.39l.83.66c.08.06.1.16.05.25l-.8 1.39c-.05.09-.16.12-.24.09l-.99-.4c-.21.16-.43.29-.67.39L14 13.83c-.01.1-.1.17-.2.17h-1.6c-.1 0-.18-.07-.2-.17l-.15-1.06c-.25-.1-.47-.23-.68-.39l-.99.4c-.09.03-.2 0-.25-.09l-.8-1.39c-.05-.08-.03-.19.05-.25l.84-.66c-.01-.13-.02-.26-.02-.39s.02-.27.04-.39l-.85-.66c-.08-.06-.1-.16-.05-.26l.8-1.38c.05-.09.15-.12.24-.09l1 .4c.2-.15.43-.29.67-.39l.15-1.06c.02-.1.1-.17.2-.17h1.6c.1 0 .18.07.2.17l.15 1.06c.24.1.46.23.67.39l1-.4c.09-.03.2 0 .24.09l.8 1.38c.05.09.03.2-.05.26l-.85.66c.03.12.04.25.04.39z"/></svg>
<div style="left:873.2px;top:164px;width:14.5px;height:14.5px;background:#22c55e;border-radius:50%;"></div>
<div style="left:0px;top:238.4px;width:975px;height:105px;background:#f9fafb;border-radius:18px;"></div>
<div style="left:20.5px;top:258.9px;width:62.5px;height:63.5px;background:#d7f1e8;border-radius:14px;"></div>
<svg viewBox="0 0 24 24" style="left:27.5px;top:266.7px;width:48px;height:48px;fill:#10b981;"><path d="M19 3h-4.18C14.4 1.84 13.3 1 12 1c-1.3 0-2.4.84-2.82 2H5c-1.1 0-2 .9-2 2v14c0 1.1.9 2 2 2h14c1.1 0 2-.9 2-2V5c0-1.1-.9-2-2-2zm-7 0c.55 0 1 .45 1 1s-.45 1-1 1-1-.45-1-1 .45-1 1-1zm-2 14l-4-4 1.41-1.41L10 14.17l6.59-6.59L18 9l-8 8z"/></svg>
<div style="left:873.2px;top:283.2px;width:14.5px;height:14.5px;background:#22c55e;border-radius:50%;"></div>
<div style="left:0px;top:357.6px;width:975px;height:105px;background:#f9fafb;border-radius:18px;"></div>
<div style="left:20.5px;top:378.1px;width:62.5px;height:63.5px;background:#e9e3fa;border-radius:14px;"></div>
<svg viewBox="0 0 24 24" style="left:27.5px;top:385.9px;width:48px;height:48px;fill:#8b5cf6;"><path d="M20 2H4c-1.1 0-1.99.9-1.99 2L2 22l4-4h14c1.1 0 2-.9 2-2V4c0-1.1-.9-2-2-2zM6 14v-2.47l6.88-6.88c.2-.2.51-.2.71 0l1.77 1.77c.2.2.2.51 0 .71L8.47 14H6zm12 0h-7.5l2-2H18v2z"/></svg>
<div style="left:873.2px;top:402.4px;width:14.5px;height:14.5px;background:#22c55e;border-radius:50%;"></div>
</div>
<span class="t f-s" style="top:1178.95px;font-size:22.5px;color:#111827;-webkit-text-stroke:0.77px;letter-spacing:1.359px;left:2863px;">Orchestrator</span>
<span class="t f-s" style="top:1212.07px;font-size:20px;color:#6b7280;letter-spacing:0.020px;left:2863px;">Claude 3.5 Sonnet</span>
<span class="t f-s" style="top:1194.07px;font-size:20px;color:#16a34a;letter-spacing:-0.578px;left:3656.3px;">Ready</span>
<span class="t f-s" style="top:1298.15px;font-size:22.5px;color:#111827;-webkit-text-stroke:0.77px;letter-spacing:1.243px;left:2863px;">Content Analyzer</span>
<span class="t f-s" style="top:1331.27px;font-size:20px;color:#6b7280;letter-spacing:0.020px;left:2863px;">Claude 3.5 Sonnet</span>
<span class="t f-s" style="top:1313.27px;font-size:20px;color:#16a34a;letter-spacing:-0.578px;left:3656.3px;">Ready</span>
<span class="t f-s" style="top:1417.35px;font-size:22.5px;color:#111827;-webkit-text-stroke:0.77px;letter-spacing:0.788px;left:2863px;">Rubric Scorer</span>
<span class="t f-s" style="top:1450.47px;font-size:20px;color:#6b7280;letter-spacing:0.020px;left:2863px;">Claude 3.5 Sonnet</span>
<span class="t f-s" style="top:1432.47px;font-size:20px;color:#16a34a;letter-spacing:-0.578px;left:3656.3px;">Ready</span>
<span class="t f-s" style="top:1536.55px;font-size:22.5px;color:#111827;-webkit-text-stroke:0.77px;letter-spacing:0.919px;left:2863px;">Feedback Generator</span>
<span class="t f-s" style="top:1569.67px;font-size:20px;color:#6b7280;letter-spacing:0.019px;left:2863px;">Claude 3 Haiku</span>
<span class="t f-s" style="top:1551.67px;font-size:20px;color:#16a34a;letter-spacing:-0.578px;left:3656.3px;">Ready</span>
<div style="left:3733.5px;top:1152.7px;width:10px;height:447.3px;background:#f3f4f6;border-radius:5px;"></div>
<div style="left:3736.2px;top:1156.4px;width:4.8px;height:206px;background:#cbd0d9;border-radius:3px;"></div>
<div style="left:2758.5px;top:1630.4px;width:985px;height:361.2px;background:#f9fafb;border:2px solid #e7e9ec;border-radius:14px;"></div>
<svg viewBox="0 0 24 24" style="left:2786.4px;top:1657.5px;width:48px;height:48px;fill:#16a34a;"><path d="M19 14V6c0-1.1-.9-2-2-2H3c-1.1 0-2 .9-2 2v8c0 1.1.9 2 2 2h14c1.1 0 2-.9 2-2zm-9-1c-1.66 0-3-1.34-3-3s1.34-3 3-3 3 1.34 3 3-1.34 3-3 3zm13-6v11c0 1.1-.9 2-2 2H4v-2h17V7h2z"/></svg>
<h3 class="t f-s" style="top:1670.23px;font-size:23px;color:#1f2937;-webkit-text-stroke:0.78px;letter-spacing:0.496px;left:2850.6px;">Estimated Cost</h3>
<span class="t f-s" style="top:1732.83px;font-size:23px;color:#4b5563;letter-spacing:0.167px;left:2787.6px;">Processing (0 submissions)</span>
<span class="t f-s" style="top:1734.03px;font-size:23px;color:#111827;font-weight:700;letter-spacing:0.559px;right:124.64px;">$0.00</span>
<span class="t f-s" style="top:1783.13px;font-size:23px;color:#4b5563;letter-spacing:-0.357px;left:2787.6px;">Est. Time</span>
<span class="t f-s" style="top:1784.03px;font-size:23px;color:#1e3a8a;-webkit-text-stroke:0.78px;letter-spacing:1.343px;right:123.86px;">~0 min</span>
<div style="left:2787.6px;top:1825px;width:927.2px;height:2px;background:#e5e7eb;"></div>
<span class="t f-s" style="top:1843.37px;font-size:20px;color:#6b7280;letter-spacing:0.202px;left:2787.6px;">Traditional Cost (6 min/essay @ $75/hr)</span>
<span class="t f-s" style="top:1843.37px;font-size:20px;color:#9ca3af;letter-spacing:-0.216px;right:125.42px;text-decoration:line-through;">$0.00</span>
<div style="left:2787.6px;top:1883.9px;width:927.2px;height:77.1px;background:#dcfce7;border:2px solid #bbf7d0;border-radius:15px;"></div>
<svg viewBox="0 0 24 24" style="left:3115.3px;top:1898.7px;width:48px;height:48px;fill:#16a34a;"><path d="M16 18l2.29-2.29-4.88-4.88-4 4L2 7.41 3.41 6l6 6 4-4 6.3 6.29L22 12v6z"/></svg>
<span class="t f-s" style="top:1910.61px;font-size:23.5px;color:#15803d;-webkit-text-stroke:0.80px;letter-spacing:0.031px;left:3177.4px;">Save NaN% ($0.00)</span>
</section>
<div style="left:3832.2px;top:117.4px;width:4.8px;height:1430px;background:#c9cdd9;border-radius:3px;"></div>
<div style="left:446px;top:113.8px;width:3394px;height:112px;background:linear-gradient(180deg,rgba(10,12,14,0.135) 0%,rgba(10,12,14,0.09) 33%,rgba(10,12,14,0.043) 62%,rgba(10,12,14,0.02) 80%,rgba(10,12,14,0) 100%);-webkit-mask-image:linear-gradient(90deg,#000 0%,#000 96.8%,rgba(0,0,0,0.4) 100%);mask-image:linear-gradient(90deg,#000 0%,#000 96.8%,rgba(0,0,0,0.4) 100%);pointer-events:none;"></div>
<div style="left:446px;top:112px;width:3394px;height:1.8px;background:#fdfdfd;"></div>
<div style="left:446px;top:112px;width:84px;height:2048px;background:linear-gradient(90deg,rgba(20,22,26,0.095) 0%,rgba(20,22,26,0.055) 25%,rgba(20,22,26,0.025) 52%,rgba(20,22,26,0.008) 80%,rgba(20,22,26,0) 100%);pointer-events:none;"></div>
</main>
<header>
<div style="left:446px;top:0px;width:3394px;height:112px;background:linear-gradient(90deg,#1e2539 0%,#222a3d 12%,#2b3346 35%,#2c3449 55%,#2a3356 76%,#26325f 100%);"></div>
<div style="left:446px;top:0px;width:3394px;height:112px;background:linear-gradient(180deg,rgba(255,255,255,0.045) 0%,rgba(255,255,255,0) 55%,rgba(0,0,0,0.10) 100%);"></div>
<div style="left:446px;top:110.2px;width:3394px;height:1.8px;background:rgba(0,0,0,0.33);"></div>
<svg viewBox="0 0 24 24" style="left:504px;top:25.3px;width:48px;height:48px;fill:#e2e8f0;"><path d="M3 18h18v-2H3v2zm0-5h18v-2H3v2zm0-7v2h18V6H3z"/></svg>
<button style="left:3070.8px;top:23px;width:249px;height:65.7px;background:linear-gradient(100deg,#22429c,#1b3474);border:2px solid rgba(96,130,220,0.3);border-radius:14px;box-shadow:0 4px 14px rgba(0,0,0,0.25);"></button>
<svg viewBox="0 0 24 24" style="left:3097.6px;top:41.3px;width:29px;height:29px;fill:#fff;"><path d="M19 13h-6v6h-2v-6H5v-2h6V5h2v6h6v2z"/></svg>
<span class="t f-s" style="top:44.18px;font-size:24px;color:#fff;-webkit-text-stroke:0.82px;letter-spacing:0.549px;left:3138px;">Quick Actions</span>
<svg viewBox="0 0 24 24" style="left:3361.6px;top:26px;width:48px;height:48px;fill:#cbd5e1"><path d="M20 3h-1V1h-2v2H7V1H5v2H4c-1.1 0-2 .9-2 2v16c0 1.1.9 2 2 2h16c1.1 0 2-.9 2-2V5c0-1.1-.9-2-2-2zm0 18H4V10h16v11zm0-13H4V5h16v3z"/></svg>
<svg viewBox="0 0 24 24" style="left:3465.3px;top:26.7px;width:48px;height:48px;fill:#cbd5e1;"><path d="M12 22c1.1 0 2-.9 2-2h-4c0 1.1.9 2 2 2zm6-6v-5c0-3.07-1.63-5.64-4.5-6.32V4c0-.83-.67-1.5-1.5-1.5s-1.5.67-1.5 1.5v.68C7.64 5.36 6 7.92 6 11v5l-2 2v1h16v-1l-2-2zm-2 1H8v-6c0-2.48 1.51-4.5 4-4.5s4 2.02 4 4.5v6z"/></svg>
<div style="left:3496px;top:8px;width:35.5px;height:35.5px;background:#98324b;border-radius:50%;"></div>
<span class="t f-s" style="top:17.07px;font-size:20px;color:#cfa9b5;font-weight:700;left:3513.70px;transform:translateX(-50%);">4</span>
<div style="left:3572.2px;top:25px;width:63.8px;height:63.8px;border-radius:50%;background:#4e5b87;"></div>
<svg viewBox="0 0 100 100" style="left:3575.8px;top:28.6px;width:56.6px;height:56.6px;border-radius:50%;overflow:hidden;"><circle cx="50" cy="50" r="50" fill="#bbbecb"/><path d="M36 70 L34 92 L66 92 L62 74 Z" fill="#a67e74"/><ellipse cx="29" cy="57" rx="4" ry="7" fill="#b98c7e"/><ellipse cx="52.5" cy="57" rx="20" ry="25" fill="#dcab98"/><path d="M31 60 C27 50 25 36 33 22 C40 10 60 6 70 14 C80 22 80 42 76 56 L72 56 C73 48 71 41 67 36 C58 35 46 37 41 44 C37 50 36 56 34 62 Z" fill="#2e2a32"/><ellipse cx="42" cy="53.5" rx="5.5" ry="2.2" fill="#5b4243"/><ellipse cx="63" cy="53.5" rx="4.6" ry="2" fill="#5b4243"/><ellipse cx="56" cy="66.5" rx="4.5" ry="2" fill="#7a5452"/><path d="M47 76 Q54 78 60 75.5" stroke="#a87469" stroke-width="1.6" fill="none"/><path d="M18 104 C22 88 30 82 40 84 L50 96 L66 90 C74 92 80 98 82 104 Z" fill="#8d98ab"/><path d="M40 83 L50 96 L66 89 L62 85 L51 91 L44 81 Z" fill="#e6eaf1"/></svg>
<span class="t f-s" style="top:29.98px;font-size:24px;color:#fff;font-weight:700;letter-spacing:-0.930px;left:3654px;">John Smith</span>
<span class="t f-s" style="top:62.75px;font-size:20.5px;color:#cbd5e1;letter-spacing:0.180px;left:3654px;">Manager</span>
</header>
<aside>
<div style="left:0px;top:0px;width:446px;height:2160px;background:linear-gradient(90deg,#232a3d 0%,#242d45 48%,#24305a 100%);"></div>
<div style="left:0px;top:0px;width:446px;height:2160px;background:linear-gradient(90deg,rgba(37,44,61,0.6) 0%,rgba(46,54,71,1) 55%,rgba(51,59,77,1) 100%);-webkit-mask-image:linear-gradient(180deg,#000 0%,rgba(0,0,0,0.78) 11%,rgba(0,0,0,0.4) 26%,rgba(0,0,0,0.15) 48%,transparent 75%);mask-image:linear-gradient(180deg,#000 0%,rgba(0,0,0,0.78) 11%,rgba(0,0,0,0.4) 26%,rgba(0,0,0,0.15) 48%,transparent 75%);"></div>
<div style="left:445px;top:0px;width:1.5px;height:112px;background:rgba(255,255,255,0.2);"></div>
<div style="left:0px;top:224px;width:446px;height:1.5px;background:rgba(255,255,255,0.12);"></div>
<div style="left:35.4px;top:77px;width:70px;height:70px;background:linear-gradient(135deg,#21419c,#1b3577);border-radius:17px;box-shadow:0 4px 12px rgba(0,0,0,0.25);"></div>
<svg viewBox="0 0 24 24" style="left:51.7px;top:93.5px;width:37.5px;height:37.5px;fill:#fff;"><path d="M10 16v-1H3.01L3 19c0 1.11.89 2 2 2h14c1.11 0 2-.89 2-2v-4h-7v1h-4zm10-9h-4.01V5l-2-2h-4l-2 2v2H4c-1.1 0-2 .9-2 2v3c0 1.11.89 2 2 2h6v-2h4v2h6c1.1 0 2-.9 2-2V9c0-1.1-.9-2-2-2zm-6 0h-4V5h4v2z"/></svg>
<span class="t f-s" style="top:42.52px;font-size:27.5px;color:#fff;font-weight:700;letter-spacing:0.102px;left:126px;">Nexgile-</span>
<span class="t f-s" style="top:83.32px;font-size:27.5px;color:#fff;font-weight:700;letter-spacing:-0.034px;left:126px;">EduOrchestra</span>
<span class="t f-s" style="top:126.82px;font-size:20.3px;color:#cfd6e2;letter-spacing:0.664px;left:126px;">Orchestrating Educational</span>
<span class="t f-s" style="top:161.82px;font-size:20.3px;color:#cfd6e2;letter-spacing:0.495px;left:126px;">Excellence with AI Agents</span>
<nav>
<svg viewBox="0 0 24 24" style="left:41px;top:270.3px;width:37.5px;height:37.5px;fill:#cbd3e1;"><path d="M3 13h8V3H3v10zm0 8h8v-6H3v6zm10 0h8V11h-8v10zm0-18v6h8V3h-8z"/></svg>
<a class="t f-s" style="top:284.75px;font-size:22.5px;color:#cfd7e5;-webkit-text-stroke:0.77px;letter-spacing:1.153px;left:99.5px;">Dashboard</a>
<svg viewBox="0 0 24 24" style="left:41px;top:360.3px;width:37.5px;height:37.5px;fill:#cbd3e1;"><path d="M19 3h-4.18C14.4 1.84 13.3 1 12 1c-1.3 0-2.4.84-2.82 2H5c-1.1 0-2 .9-2 2v14c0 1.1.9 2 2 2h14c1.1 0 2-.9 2-2V5c0-1.1-.9-2-2-2zm-7 0c.55 0 1 .45 1 1s-.45 1-1 1-1-.45-1-1 .45-1 1-1zm2 14H7v-2h7v2zm3-4H7v-2h10v2zm0-4H7V7h10v2z"/></svg>
<a class="t f-s" style="top:374.75px;font-size:22.5px;color:#cfd7e5;-webkit-text-stroke:0.77px;letter-spacing:0.520px;left:99.5px;">Assessments</a>
<svg viewBox="0 0 24 24" style="left:41px;top:450.3px;width:37.5px;height:37.5px;fill:#cbd3e1;"><path d="M3 10h11v2H3v-2zm0-2h11V6H3v2zm0 8h7v-2H3v2zm15.01-3.13l.71-.71c.39-.39 1.02-.39 1.41 0l.71.71c.39.39.39 1.02 0 1.41l-.71.71-2.12-2.12zm-.71.71l-5.3 5.3V21h2.12l5.3-5.3-2.12-2.12z"/></svg>
<a class="t f-s" style="top:464.75px;font-size:22.5px;color:#cfd7e5;-webkit-text-stroke:0.77px;letter-spacing:0.918px;left:99.5px;">Create Question</a>
<svg viewBox="0 0 24 24" style="left:41px;top:540.3px;width:37.5px;height:37.5px;fill:#cbd3e1;"><path d="M20 6h-8l-2-2H4c-1.1 0-1.99.9-1.99 2L2 18c0 1.1.9 2 2 2h16c1.1 0 2-.9 2-2V8c0-1.1-.9-2-2-2zm0 12H4V8h16v10z"/></svg>
<a class="t f-s" style="top:554.75px;font-size:22.5px;color:#cfd7e5;-webkit-text-stroke:0.77px;letter-spacing:1.026px;left:99.5px;">Question Bank</a>
<svg viewBox="0 0 24 24" style="left:41px;top:630.3px;width:37.5px;height:37.5px;fill:#cbd3e1;"><path d="M12 17.27L18.18 21l-1.64-7.03L22 9.24l-7.19-.61L12 2 9.19 8.63 2 9.24l5.46 4.73L5.82 21z"/></svg>
<a class="t f-s" style="top:644.75px;font-size:22.5px;color:#cfd7e5;-webkit-text-stroke:0.77px;letter-spacing:1.259px;left:99.5px;">Grading</a>
<svg viewBox="0 0 24 24" style="left:41px;top:720.3px;width:37.5px;height:37.5px;fill:#cbd3e1;"><path d="M21 8c-1.45 0-2.26 1.44-1.93 2.51l-3.55 3.56c-.3-.09-.74-.09-1.04 0l-2.55-2.55C12.27 10.45 11.46 9 10 9c-1.45 0-2.27 1.44-1.93 2.52l-4.56 4.55C2.44 15.74 1 16.55 1 18c0 1.1.9 2 2 2 1.45 0 2.26-1.44 1.93-2.51l4.55-4.56c.3.09.74.09 1.04 0l2.55 2.55C12.73 16.55 13.54 18 15 18c1.45 0 2.27-1.44 1.93-2.52l3.56-3.55c1.07.33 2.51-.48 2.51-1.93 0-1.1-.9-2-2-2zM15 9l.94-2.07L18 6l-2.06-.93L15 3l-.92 2.07L12 6l2.08.93zM3.5 11L4 9l2-.5L4 8l-.5-2L3 8l-2 .5L3 9z"/></svg>
<a class="t f-s" style="top:734.75px;font-size:22.5px;color:#cfd7e5;-webkit-text-stroke:0.77px;letter-spacing:1.113px;left:99.5px;">Student Dashboard</a>
<svg viewBox="0 0 24 24" style="left:41px;top:810.3px;width:37.5px;height:37.5px;fill:#cbd3e1;"><path d="M13 8.57c-.79 0-1.43.64-1.43 1.43s.64 1.43 1.43 1.43 1.43-.64 1.43-1.43-.64-1.43-1.43-1.43zM13 3C9.25 3 6.2 5.94 6.02 9.64L4.1 12.2c-.25.33-.01.8.4.8H6v3c0 1.1.9 2 2 2h1v3h7v-4.68c2.36-1.12 4-3.53 4-6.32 0-3.87-3.13-7-7-7zm3 7c0 .13-.01.26-.02.39l.83.66c.08.06.1.16.05.25l-.8 1.39c-.05.09-.16.12-.24.09l-.99-.4c-.21.16-.43.29-.67.39L14 13.83c-.01.1-.1.17-.2.17h-1.6c-.1 0-.18-.07-.2-.17l-.15-1.06c-.25-.1-.47-.23-.68-.39l-.99.4c-.09.03-.2 0-.25-.09l-.8-1.39c-.05-.08-.03-.19.05-.25l.84-.66c-.01-.13-.02-.26-.02-.39s.02-.27.04-.39l-.85-.66c-.08-.06-.1-.16-.05-.26l.8-1.38c.05-.09.15-.12.24-.09l1 .4c.2-.15.43-.29.67-.39l.15-1.06c.02-.1.1-.17.2-.17h1.6c.1 0 .18.07.2.17l.15 1.06c.24.1.46.23.67.39l1-.4c.09-.03.2 0 .24.09l.8 1.38c.05.09.03.2-.05.26l-.85.66c.03.12.04.25.04.39z"/></svg>
<a class="t f-s" style="top:824.75px;font-size:22.5px;color:#cfd7e5;-webkit-text-stroke:0.77px;letter-spacing:1.124px;left:99.5px;">Practice Mode</a>
<svg viewBox="0 0 24 24" style="left:41px;top:900.3px;width:37.5px;height:37.5px;fill:#cbd3e1;"><path d="M19 5h-2V3H7v2H5c-1.1 0-2 .9-2 2v1c0 2.55 1.92 4.63 4.39 4.94.63 1.5 1.98 2.63 3.61 2.96V19H7v2h10v-2h-4v-3.1c1.63-.33 2.98-1.46 3.61-2.96C19.08 12.63 21 10.55 21 8V7c0-1.1-.9-2-2-2zM5 8V7h2v3.82C5.84 10.4 5 9.3 5 8zm14 0c0 1.3-.84 2.4-2 2.82V7h2v1z"/></svg>
<a class="t f-s" style="top:914.75px;font-size:22.5px;color:#cfd7e5;-webkit-text-stroke:0.77px;letter-spacing:1.179px;left:99.5px;">Achievements</a>
<svg viewBox="0 0 24 24" style="left:41px;top:990.3px;width:37.5px;height:37.5px;fill:#cbd3e1;"><path d="M4 7h16v2H4V7zm0 6h16v-2H4v2zm0 4h7v-2H4v2zm0 4h7v-2H4v2zm11.41-2.83L14 16.75l-1.41 1.41L15.41 21 20 16.42 18.58 15l-3.17 3.17zM4 3v2h16V3H4z"/></svg>
<a class="t f-s" style="top:1004.75px;font-size:22.5px;color:#cfd7e5;-webkit-text-stroke:0.77px;letter-spacing:1.049px;left:99.5px;">AI Grading</a>
<svg viewBox="0 0 24 24" style="left:41px;top:1080.3px;width:37.5px;height:37.5px;fill:#cbd3e1;"><path d="M20 3H4c-1.1 0-2 .9-2 2v14c0 1.1.9 2 2 2h16c1.1 0 2-.9 2-2V5c0-1.1-.9-2-2-2zM10 17H5v-2h5v2zm0-4H5v-2h5v2zm0-4H5V7h5v2zm4.82 6L12 12.16l1.41-1.41 1.41 1.42L17.99 9l1.42 1.42L14.82 15z"/></svg>
<a class="t f-s" style="top:1094.75px;font-size:22.5px;color:#cfd7e5;-webkit-text-stroke:0.77px;letter-spacing:1.215px;left:99.5px;">Quality Analyzer</a>
<svg viewBox="0 0 24 24" style="left:41px;top:1170.3px;width:37.5px;height:37.5px;fill:#cbd3e1;"><path d="M16 18l2.29-2.29-4.88-4.88-4 4L2 7.41 3.41 6l6 6 4-4 6.3 6.29L22 12v6z"/></svg>
<a class="t f-s" style="top:1184.75px;font-size:22.5px;color:#cfd7e5;-webkit-text-stroke:0.77px;letter-spacing:1.449px;left:99.5px;">Dropout Prediction</a>
<svg viewBox="0 0 24 24" style="left:41px;top:1260.3px;width:37.5px;height:37.5px;fill:#cbd3e1;"><path d="M19 3H5c-1.1 0-2 .9-2 2v14c0 1.1.9 2 2 2h14c1.1 0 2-.9 2-2V5c0-1.1-.9-2-2-2zM9 17H7v-5h2v5zm4 0h-2v-3h2v3zm0-5h-2v-2h2v2zm4 5h-2V7h2v10z"/></svg>
<a class="t f-s" style="top:1274.75px;font-size:22.5px;color:#cfd7e5;-webkit-text-stroke:0.77px;letter-spacing:1.094px;left:99.5px;">Analytics</a>
<svg viewBox="0 0 24 24" style="left:41px;top:1350.3px;width:37.5px;height:37.5px;fill:#cbd3e1;"><path d="M14 2H6c-1.1 0-1.99.9-1.99 2L4 20c0 1.1.89 2 1.99 2H18c1.1 0 2-.9 2-2V8l-6-6zm2 16H8v-2h8v2zm0-4H8v-2h8v2zm-3-5V3.5L18.5 9H13z"/></svg>
<a class="t f-s" style="top:1364.75px;font-size:22.5px;color:#cfd7e5;-webkit-text-stroke:0.77px;letter-spacing:1.084px;left:99.5px;">Reports</a>
<svg viewBox="0 0 24 24" style="left:41px;top:1440.3px;width:37.5px;height:37.5px;fill:#cbd3e1;"><path d="M21 5c-1.11-.35-2.33-.5-3.5-.5-1.95 0-4.05.4-5.5 1.5-1.45-1.1-3.55-1.5-5.5-1.5S2.45 4.9 1 6v14.65c0 .25.25.5.5.5.1 0 .15-.05.25-.05C3.1 20.45 5.05 20 6.5 20c1.95 0 4.05.4 5.5 1.5 1.35-.85 3.8-1.5 5.5-1.5 1.65 0 3.35.3 4.75 1.05.1.05.15.05.25.05.25 0 .5-.25.5-.5V6c-.6-.45-1.25-.75-2-1zm0 13.5c-1.1-.35-2.3-.5-3.5-.5-1.7 0-4.15.65-5.5 1.5V8c1.35-.85 3.8-1.5 5.5-1.5 1.2 0 2.4.15 3.5.5v11.5zM17.5 10.5c.88 0 1.73.09 2.5.26V9.24c-.79-.15-1.64-.24-2.5-.24-1.7 0-3.24.29-4.5.83v1.66c1.13-.64 2.7-.99 4.5-.99zM13 12.49v1.66c1.13-.64 2.7-.99 4.5-.99.88 0 1.73.09 2.5.26V11.9c-.79-.15-1.64-.24-2.5-.24-1.7 0-3.24.3-4.5.83zM17.5 14.33c-1.7 0-3.24.29-4.5.83v1.66c1.13-.64 2.7-.99 4.5-.99.88 0 1.73.09 2.5.26v-1.52c-.79-.16-1.64-.24-2.5-.24z"/></svg>
<a class="t f-s" style="top:1454.75px;font-size:22.5px;color:#cfd7e5;-webkit-text-stroke:0.77px;letter-spacing:0.451px;left:99.5px;">Courses</a>
<svg viewBox="0 0 24 24" style="left:41px;top:1530.3px;width:37.5px;height:37.5px;fill:#cbd3e1;"><path d="M16 11c1.66 0 2.99-1.34 2.99-3S17.66 5 16 5c-1.66 0-3 1.34-3 3s1.34 3 3 3zm-8 0c1.66 0 2.99-1.34 2.99-3S9.66 5 8 5C6.34 5 5 6.34 5 8s1.34 3 3 3zm0 2c-2.33 0-7 1.17-7 3.5V19h14v-2.5c0-2.33-4.67-3.5-7-3.5zm8 0c-.29 0-.62.02-.97.05 1.16.84 1.97 1.97 1.97 3.45V19h6v-2.5c0-2.33-4.67-3.5-7-3.5z"/></svg>
<a class="t f-s" style="top:1544.75px;font-size:22.5px;color:#cfd7e5;-webkit-text-stroke:0.77px;letter-spacing:0.209px;left:99.5px;">Users</a>
<svg viewBox="0 0 24 24" style="left:41px;top:1620.3px;width:37.5px;height:37.5px;fill:#cbd3e1;"><path d="M12 2C6.48 2 2 6.48 2 12s4.48 10 10 10 10-4.48 10-10S17.52 2 12 2zm0 3c1.66 0 3 1.34 3 3s-1.34 3-3 3-3-1.34-3-3 1.34-3 3-3zm0 14.2c-2.5 0-4.71-1.28-6-3.22.03-1.99 4-3.08 6-3.08 1.99 0 5.97 1.09 6 3.08-1.29 1.94-3.5 3.22-6 3.22z"/></svg>
<a class="t f-s" style="top:1634.75px;font-size:22.5px;color:#cfd7e5;-webkit-text-stroke:0.77px;letter-spacing:1.263px;left:99.5px;">My Profile</a>
<svg viewBox="0 0 24 24" style="left:41px;top:1710.3px;width:37.5px;height:37.5px;fill:#cbd3e1;"><path d="M19.14 12.94c.04-.3.06-.61.06-.94 0-.32-.02-.64-.07-.94l2.03-1.58c.18-.14.23-.41.12-.61l-1.92-3.32c-.12-.22-.37-.29-.59-.22l-2.39.96c-.5-.38-1.03-.7-1.62-.94l-.36-2.54c-.04-.24-.24-.41-.48-.41h-3.84c-.24 0-.43.17-.47.41l-.36 2.54c-.59.24-1.13.57-1.62.94l-2.39-.96c-.22-.08-.47 0-.59.22L2.74 8.87c-.12.21-.08.47.12.61l2.03 1.58c-.05.3-.09.63-.09.94s.02.64.07.94l-2.03 1.58c-.18.14-.23.41-.12.61l1.92 3.32c.12.22.37.29.59.22l2.39-.96c.5.38 1.03.7 1.62.94l.36 2.54c.05.24.24.41.48.41h3.84c.24 0 .44-.17.47-.41l.36-2.54c.59-.24 1.13-.56 1.62-.94l2.39.96c.22.08.47 0 .59-.22l1.92-3.32c.12-.22.07-.47-.12-.61l-2.01-1.58zM12 15.6c-1.98 0-3.6-1.62-3.6-3.6s1.62-3.6 3.6-3.6 3.6 1.62 3.6 3.6-1.62 3.6-3.6 3.6z"/></svg>
<a class="t f-s" style="top:1724.75px;font-size:22.5px;color:#cfd7e5;-webkit-text-stroke:0.77px;letter-spacing:1.098px;left:99.5px;">Settings</a>
<svg viewBox="0 0 24 24" style="left:41px;top:1800.3px;width:37.5px;height:37.5px;fill:#cbd3e1;"><path d="M17 11c.34 0 .67.04 1 .09V6.27L10.5 3 3 6.27v4.91c0 4.54 3.2 8.79 7.5 9.82.55-.13 1.08-.32 1.6-.55-.69-.98-1.1-2.17-1.1-3.45 0-3.31 2.69-6 6-6zM17 13c-2.21 0-4 1.79-4 4s1.79 4 4 4 4-1.79 4-4-1.79-4-4-4zm0 1.38c.62 0 1.12.51 1.12 1.12s-.51 1.12-1.12 1.12-1.12-.51-1.12-1.12.5-1.12 1.12-1.12zm0 5.37c-.93 0-1.74-.46-2.24-1.17.05-.72 1.51-1.08 2.24-1.08s2.19.36 2.24 1.08c-.5.71-1.31 1.17-2.24 1.17z"/></svg>
<a class="t f-s" style="top:1814.75px;font-size:22.5px;color:#cfd7e5;-webkit-text-stroke:0.77px;letter-spacing:1.032px;left:99.5px;">Admin Panel</a>
</nav>
</aside>
</div>
<script>(function(){var w=window.innerWidth||3840;if(w<3800){document.getElementById('app').style.zoom=w/3840;}})();</script>
</body>
</html>
